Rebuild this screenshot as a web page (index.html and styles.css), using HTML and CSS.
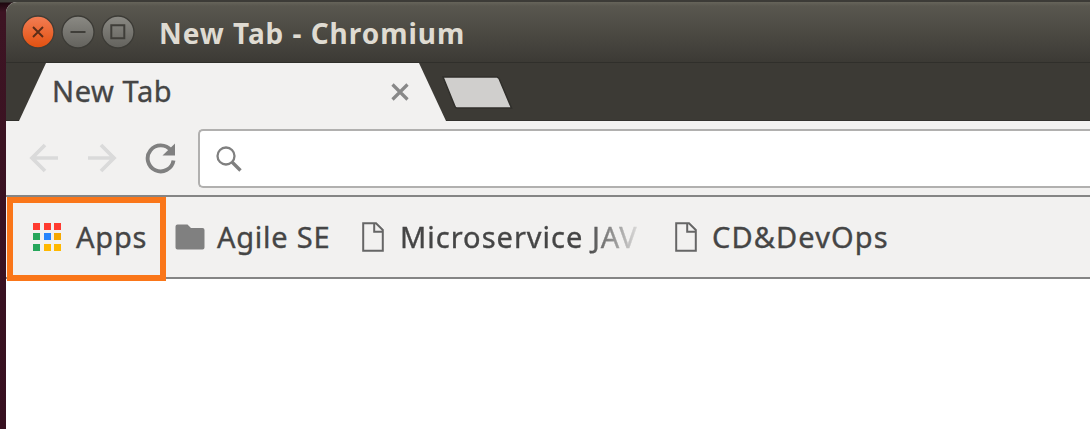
FILE: index.html
```html
<!DOCTYPE html>
<html lang="en">
<head>
<meta charset="utf-8">
<title>New Tab - Chromium</title>
<link rel="stylesheet" href="styles.css">
</head>
<body>
<main class="window">
  <header class="frame">
    <div class="titlebar">
      <div class="controls">
        <svg class="control" viewBox="0 0 34 34"><defs><linearGradient id="red" x2="0" y2="1"><stop stop-color="#f37e55"/><stop offset="1" stop-color="#e2500f"/></linearGradient><linearGradient id="grey" x2="0" y2="1"><stop stop-color="#8b8a84"/><stop offset="1" stop-color="#63625d"/></linearGradient></defs><circle cx="17" cy="17" r="16" fill="url(#red)" stroke="#413d36" stroke-width="1.3"/><path d="M12 12l10 10M22 12L12 22" stroke="#5a2c18" stroke-width="1.9"/></svg>
        <svg class="control" viewBox="0 0 34 34"><circle cx="17" cy="17" r="16" fill="url(#grey)" stroke="#3c3b36" stroke-width="1.3"/><path d="M9.5 17h15" stroke="#3f3e39" stroke-width="2"/></svg>
        <svg class="control" viewBox="0 0 34 34"><circle cx="17" cy="17" r="16" fill="url(#grey)" stroke="#3c3b36" stroke-width="1.3"/><path d="M10.3 10.3h13v13h-13z" fill="none" stroke="#3f3e39" stroke-width="2"/></svg>
      </div>
      <h1 class="title">New Tab - Chromium</h1>
    </div>
    <div class="tabs">
      <div class="tab">
        <span class="tab-label">New Tab</span>
        <svg class="tab-close" viewBox="0 0 18 18"><path d="M1.500 1.500l15 15M16.500 1.500l-15 15" stroke="#888" stroke-width="3.200"/></svg>
      </div>
      <svg class="new-tab" viewBox="0 0 74 36"><path d="M3 2H57L59 3.500L71.500 33H17Q15.500 33 15 31.500Z" fill="#d0cfcd" stroke="#302f2b" stroke-width="1.500"/></svg>
    </div>
  </header>
  <nav class="toolbar">
    <svg class="nav" viewBox="0 0 32 32"><path d="M30 16H4M17 3L4 16l13 13" fill="none" stroke="#dadada" stroke-width="3.700"/></svg>
    <svg class="nav" viewBox="0 0 32 32"><path d="M2 16h26M15 3l13 13-13 13" fill="none" stroke="#dadada" stroke-width="3.700"/></svg>
    <svg class="nav" viewBox="0 0 32 32"><path d="M27 8.500A13 13 0 1 0 29.500 18.500" fill="none" stroke="#808080" stroke-width="3.900"/><path d="M31 1.500V13.500H18.500Z" fill="#808080"/></svg>
    <div class="address"><svg class="search" viewBox="0 0 28 28"><circle cx="11" cy="11" r="8.500" fill="none" stroke="#808080" stroke-width="2.300"/><path d="M17 17l8.500 8.500" stroke="#808080" stroke-width="3.300"/></svg></div>
  </nav>
  <nav class="bookmarks">
    <a class="apps">
      <span class="grid"><i class="r"></i><i class="r"></i><i class="r"></i><i class="g"></i><i class="b"></i><i class="o"></i><i class="g"></i><i class="y"></i><i class="y"></i></span>
      <span class="apps-label">Apps</span>
    </a>
    <svg class="folder" viewBox="0 0 30 26"><path d="M2.500 .5H12.500L16 4H27.500Q29.500 4 29.500 6V23.500Q29.500 25.500 27.500 25.500H2.500Q.5 25.500 .5 23.500V2.500Q.5 .5 2.500 .5Z" fill="#808080"/></svg>
    <span class="agile">Agile SE</span>
    <svg class="page" viewBox="0 0 22 30"><path d="M1.200 1.200H14L20.800 8V28.800H1.200ZM12.200 1.200V9.800H20.800" fill="none" stroke="#666" stroke-width="2"/></svg>
    <span class="micro">Microservice JAV</span>
    <svg class="page" viewBox="0 0 22 30"><path d="M1.200 1.200H14L20.800 8V28.800H1.200ZM12.200 1.200V9.800H20.800" fill="none" stroke="#666" stroke-width="2"/></svg>
    <span class="devops">CD&amp;DevOps</span>
  </nav>
</main>
</body>
</html>
```
FILE: styles.css
```css
* { box-sizing: border-box; }
body {
  margin: 0;
  height: 429px;
  overflow: hidden;
  display: flex;
  padding-left: 6px;
  background: linear-gradient(#3c3b37 0 2px, #1d080f 3px, #3d1423 12px, #371020 100%);
  font: 29px/36px "Noto Sans", "Open Sans", sans-serif;
  color: #454545;
  white-space: nowrap;
  -webkit-text-stroke: 0.35px;
}
svg { display: block; flex: none; }
.window {
  flex: 1;
  min-width: 0;
  margin-top: 2px;
  background: #fff;
  border-radius: 11px 0 0;
  overflow: hidden;
}
.frame {
  height: 119px;
  background: linear-gradient(#66645a 0, #59574f 4px, #3c3a35 60px, #3c3a35 100%);
  border-bottom: 1px solid #31302c;
}
.titlebar {
  height: 60px;
  display: flex;
  align-items: center;
  padding-left: 15px;
}
.controls { display: flex; gap: 6px; }
.control { width: 34px; height: 34px; }
.title {
  margin: 2px 0 0 24px;
  font-size: 28px;
  line-height: 36px;
  font-weight: 700;
  letter-spacing: 0.96px;
  color: #dfdbd2;
  -webkit-text-stroke: 0;
}
.tabs { display: flex; height: 59px; border-top: 1px solid #302f2b; }
.tab {
  width: 427px;
  margin-left: 13px;
  display: flex;
  align-items: center;
  justify-content: space-between;
  padding: 0 37px 0 33px;
  background: #f2f1f0;
  clip-path: polygon(0 100%, 27px 0, 400px 0, 100% 100%);
}
.tab-label { letter-spacing: 0.6px; margin-top: -2px; }
.tab-close { width: 18px; height: 18px; }
.new-tab { width: 74px; height: 36px; margin: 12px 0 0 -6px; }
.toolbar {
  height: 74px;
  display: flex;
  align-items: center;
  gap: 26px;
  padding-left: 22px;
  background: #f2f1f0;
}
.nav { width: 32px; height: 32px; }
.address {
  flex: 1;
  height: 59px;
  margin-left: -4px;
  padding: 14px 0 0 15px;
  background: #fff;
  border: 2px solid #b1b0af;
  border-right: 0;
  border-radius: 5px 0 0 5px;
}
.search { width: 28px; height: 28px; }
.bookmarks {
  height: 84px;
  display: flex;
  align-items: center;
  background: #f2f1f0;
  border-top: 2px solid #858585;
  border-bottom: 2px solid #858585;
}
.apps {
  width: 159px;
  height: 84px;
  margin: 0 9px 0 1px;
  display: flex;
  align-items: center;
  padding: 0 0 5px 20px;
  border: 6px solid #fa7619;
  position: relative;
  top: 2px;
}
.grid { display: grid; grid-template-columns: repeat(3, 7px); gap: 3.5px; }
.grid i { height: 7px; }
.r { background: #ff3b30; }
.g { background: #26a65b; }
.b { background: #2684fc; }
.o { background: #f5a800; }
.y { background: #ffb800; }
.apps-label { margin-left: 15px; letter-spacing: 0.8px; }
.folder { width: 30px; height: 26px; }
.agile { width: 145px; margin-left: 12px; letter-spacing: 0.75px; }
.page { width: 22px; height: 30px; }
.micro {
  width: 248px;
  margin: 0 27px 0 16px;
  letter-spacing: 1px;
  -webkit-mask-image: linear-gradient(90deg, #000 187px, transparent 245px);
  mask-image: linear-gradient(90deg, #000 187px, transparent 245px);
}
.devops { margin-left: 15px; letter-spacing: 1.1px; }
```
